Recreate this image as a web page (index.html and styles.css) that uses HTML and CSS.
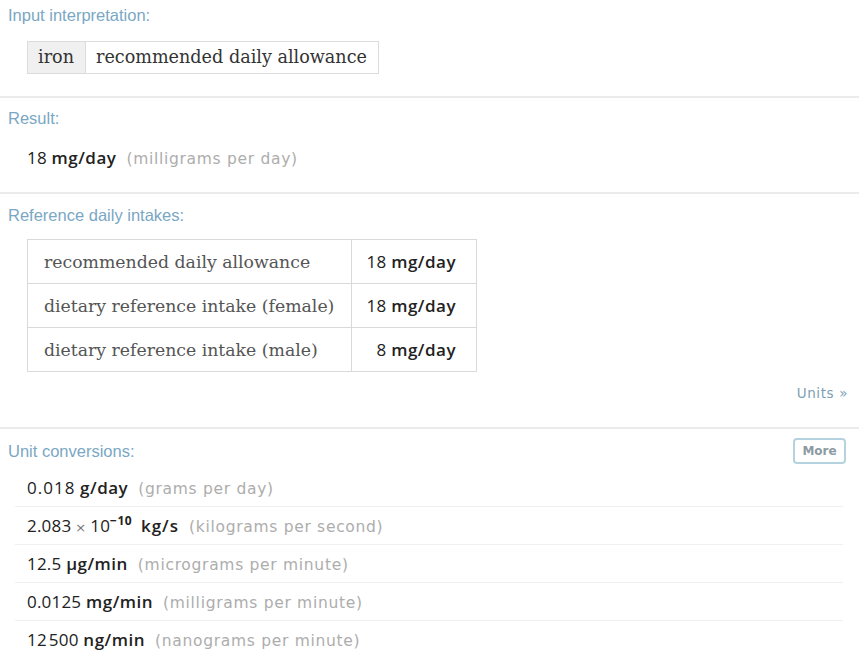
FILE: index.html
```html
<!DOCTYPE html>
<html lang="en">
<head>
<meta charset="utf-8">
<title>iron recommended daily allowance</title>
<link rel="stylesheet" href="styles.css">
</head>
<body>
<div class="results">
  <section class="pod pod-input">
    <h2 class="pod-title">Input interpretation:</h2>
    <table class="interp">
      <tr><td class="interp-key">iron</td><td class="interp-val">recommended daily allowance</td></tr>
    </table>
  </section>

  <section class="pod pod-result">
    <h2 class="pod-title">Result:</h2>
    <p class="quantity"><span class="num">18</span> <b class="unit">mg/day</b><span class="gloss">(milligrams per day)</span></p>
  </section>

  <section class="pod pod-intakes">
    <h2 class="pod-title">Reference daily intakes:</h2>
    <table class="intakes">
      <tr><td class="name">recommended daily allowance</td><td class="amount"><span class="num">18</span> <b class="unit">mg/day</b></td></tr>
      <tr><td class="name">dietary reference intake (female)</td><td class="amount"><span class="num">18</span> <b class="unit">mg/day</b></td></tr>
      <tr><td class="name">dietary reference intake (male)</td><td class="amount"><span class="num">8</span> <b class="unit">mg/day</b></td></tr>
    </table>
    <div class="pod-foot"><a class="units-link" href="#">Units&nbsp;&raquo;</a></div>
  </section>

  <section class="pod pod-conversions">
    <div class="pod-head">
      <h2 class="pod-title">Unit conversions:</h2>
      <button class="more-btn" type="button">More</button>
    </div>
    <ul class="conv-list">
      <li><span class="num num-wide">0.018</span> <b class="unit">g/day</b><span class="gloss">(grams per day)</span></li>
      <li><span class="num">2.083</span><span class="times">&times;</span><span class="num">10<sup>&minus;10</sup></span> <b class="unit unit-gap">kg/s</b><span class="gloss">(kilograms per second)</span></li>
      <li><span class="num">12.5</span> <b class="unit">&micro;g/min</b><span class="gloss">(micrograms per minute)</span></li>
      <li><span class="num">0.0125</span> <b class="unit">mg/min</b><span class="gloss">(milligrams per minute)</span></li>
      <li><span class="num">12<span class="thin"></span>500</span> <b class="unit">ng/min</b><span class="gloss">(nanograms per minute)</span></li>
    </ul>
  </section>
</div>
</body>
</html>
```

FILE: styles.css
```css
html, body {
  margin: 0;
  padding: 0;
  background: #ffffff;
}

.results {
  width: 859px;
  font-family: "Liberation Sans", Arial, sans-serif;
}

/* each pod is a block separated by a soft grey rule */
.pod {
  border-bottom: 2px solid #ebebeb;
  padding-left: 8px;
}

.pod-title {
  margin: 0;
  font-size: 16.5px;
  font-weight: normal;
  line-height: 16px;
  color: #7aa7c4;
  letter-spacing: 0;
}

/* shared quantity typography */
.num {
  font-family: "Open Sans", sans-serif;
  font-weight: 400;
  font-size: 17px;
  color: #222;
  letter-spacing: 0.2px;
}
.num-wide {
  letter-spacing: 1px;
}
.unit {
  font-family: "Open Sans", sans-serif;
  font-weight: 600;
  font-size: 17px;
  color: #222;
  letter-spacing: 0.5px;
}
.unit-gap {
  margin-left: 4px;
  letter-spacing: 1px;
}
.gloss {
  font-family: "DejaVu Sans", sans-serif;
  font-size: 15.5px;
  color: #adadad;
  letter-spacing: 0.7px;
  margin-left: 10px;
}
.thin {
  display: inline-block;
  width: 2px;
}

/* input interpretation */
.pod-input {
  padding-top: 7px;
  padding-bottom: 22px;
}
.interp {
  margin: 18px 0 0 19px;
  border-collapse: collapse;
  font-family: "DejaVu Serif", serif;
  font-size: 17.6px;
  color: #333;
}
.interp td {
  border: 1px solid #dcdcdc;
  height: 31px;
  padding: 0 11px 0 10px;
  line-height: 31px;
}
.interp-key {
  background: #f0f0f0;
}

/* result */
.pod-result {
  padding-top: 12px;
  padding-bottom: 23px;
}
.quantity {
  margin: 22px 0 0 19px;
  line-height: 20px;
  font-size: 17px;
}

/* reference daily intakes */
.pod-intakes {
  padding-top: 13px;
  padding-bottom: 26px;
}
.intakes {
  margin: 16px 0 0 19px;
  border-collapse: collapse;
  border: 1px solid #d9d9d9;
}
.intakes td {
  border: 1px solid #d9d9d9;
  height: 43px;
  padding: 0;
}
.intakes .name {
  width: 307px;
  padding-left: 16px;
  font-family: "DejaVu Serif", serif;
  font-size: 17.3px;
  color: #555;
}
.intakes .amount {
  width: 104px;
  padding-right: 20px;
  text-align: right;
  font-size: 17px;
}
.pod-foot {
  margin-top: 13px;
  display: flex;
  justify-content: flex-end;
  padding-right: 11px;
  line-height: 16px;
}
.units-link {
  font-family: "DejaVu Sans", sans-serif;
  font-size: 13.5px;
  letter-spacing: 0.6px;
  color: #7e9fb3;
  text-decoration: none;
}

/* unit conversions */
.pod-conversions {
  padding-top: 8px;
  border-bottom: none;
  padding-bottom: 10px;
}
.pod-head {
  display: flex;
  align-items: center;
  justify-content: space-between;
  height: 27px;
  padding-right: 13px;
}
.more-btn {
  box-sizing: border-box;
  width: 53px;
  height: 26px;
  border: 2px solid #b5d3df;
  border-radius: 4px;
  background: #fff;
  font-family: "DejaVu Sans", sans-serif;
  font-size: 12px;
  font-weight: bold;
  color: #8c9aa3;
  padding: 0;
}
.conv-list {
  list-style: none;
  margin: 5px 0 0 7px;
  padding: 0;
  width: 828px;
}
.conv-list li {
  box-sizing: border-box;
  height: 38px;
  line-height: 37px;
  padding-left: 12px;
  border-bottom: 1px solid #eef1f2;
  font-size: 17px;
}
.conv-list li:last-child {
  border-bottom: none;
}
.times {
  color: #777;
  font-family: "DejaVu Sans", sans-serif;
  font-size: 13px;
  margin: 0 4px;
}
.conv-list sup {
  font-size: 12px;
  font-weight: 700;
  vertical-align: 7px;
  line-height: 0;
  letter-spacing: 0.5px;
}
```
